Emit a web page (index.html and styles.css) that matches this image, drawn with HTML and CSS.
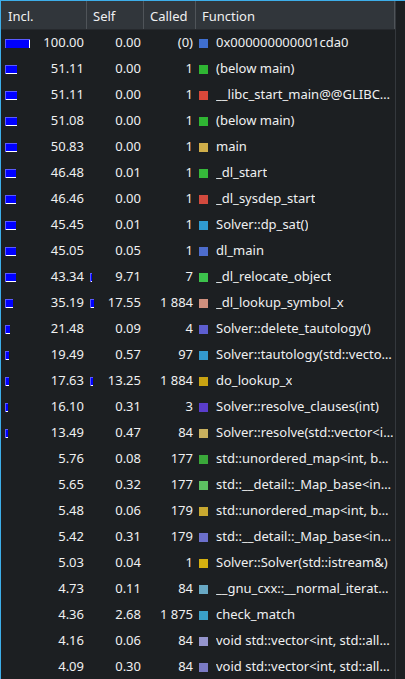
FILE: index.html
```html
<!DOCTYPE html>
<html>
<head>
<meta charset="utf-8">
<link rel="stylesheet" href="styles.css">
</head>
<body>
<div class="frame">
  <div class="table">
    <div class="head">
      <div class="hc">Incl.</div>
      <div class="hc">Self</div>
      <div class="hc">Called</div>
      <div class="hc">Function</div>
    </div>
    <div class="rows">
      <div class="row"><div class="c incl"><span class="bar full" style="width:25px"></span><span class="n">100.00</span></div><div class="c self"><span class="n">0.00</span></div><div class="c called">(0)</div><div class="c fn"><span class="sq" style="background:#3f6fd0"></span><span class="t">0x000000000001cda0</span></div></div>
      <div class="row"><div class="c incl"><span class="bar" style="width:12px"></span><span class="n">51.11</span></div><div class="c self"><span class="n">0.00</span></div><div class="c called">1</div><div class="c fn"><span class="sq" style="background:#2fb533"></span><span class="t">(below main)</span></div></div>
      <div class="row"><div class="c incl"><span class="bar" style="width:12px"></span><span class="n">51.11</span></div><div class="c self"><span class="n">0.00</span></div><div class="c called">1</div><div class="c fn"><span class="sq" style="background:#d8483a"></span><span class="t">__libc_start_main@@GLIBC…</span></div></div>
      <div class="row"><div class="c incl"><span class="bar" style="width:12px"></span><span class="n">51.08</span></div><div class="c self"><span class="n">0.00</span></div><div class="c called">1</div><div class="c fn"><span class="sq" style="background:#2fb533"></span><span class="t">(below main)</span></div></div>
      <div class="row"><div class="c incl"><span class="bar" style="width:12px"></span><span class="n">50.83</span></div><div class="c self"><span class="n">0.00</span></div><div class="c called">1</div><div class="c fn"><span class="sq" style="background:#cfae4a"></span><span class="t">main</span></div></div>
      <div class="row"><div class="c incl"><span class="bar" style="width:11px"></span><span class="n">46.48</span></div><div class="c self"><span class="n">0.01</span></div><div class="c called">1</div><div class="c fn"><span class="sq" style="background:#35b83a"></span><span class="t">_dl_start</span></div></div>
      <div class="row"><div class="c incl"><span class="bar" style="width:11px"></span><span class="n">46.46</span></div><div class="c self"><span class="n">0.00</span></div><div class="c called">1</div><div class="c fn"><span class="sq" style="background:#d24a3e"></span><span class="t">_dl_sysdep_start</span></div></div>
      <div class="row"><div class="c incl"><span class="bar" style="width:11px"></span><span class="n">45.45</span></div><div class="c self"><span class="n">0.01</span></div><div class="c called">1</div><div class="c fn"><span class="sq" style="background:#2f9bd2"></span><span class="t">Solver::dp_sat()</span></div></div>
      <div class="row"><div class="c incl"><span class="bar" style="width:11px"></span><span class="n">45.05</span></div><div class="c self"><span class="n">0.05</span></div><div class="c called">1</div><div class="c fn"><span class="sq" style="background:#4d6ccc"></span><span class="t">dl_main</span></div></div>
      <div class="row"><div class="c incl"><span class="bar" style="width:11px"></span><span class="n">43.34</span></div><div class="c self"><span class="bar" style="width:2px"></span><span class="n">9.71</span></div><div class="c called">7</div><div class="c fn"><span class="sq" style="background:#3cc24c"></span><span class="t">_dl_relocate_object</span></div></div>
      <div class="row"><div class="c incl"><span class="bar" style="width:8px"></span><span class="n">35.19</span></div><div class="c self"><span class="bar" style="width:4px"></span><span class="n">17.55</span></div><div class="c called">1 884</div><div class="c fn"><span class="sq" style="background:#d0907e"></span><span class="t">_dl_lookup_symbol_x</span></div></div>
      <div class="row"><div class="c incl"><span class="bar" style="width:5px"></span><span class="n">21.48</span></div><div class="c self"><span class="n">0.09</span></div><div class="c called">4</div><div class="c fn"><span class="sq" style="background:#5d5ed0"></span><span class="t">Solver::delete_tautology()</span></div></div>
      <div class="row"><div class="c incl"><span class="bar" style="width:4px"></span><span class="n">19.49</span></div><div class="c self"><span class="n">0.57</span></div><div class="c called">97</div><div class="c fn"><span class="sq" style="background:#3399cf"></span><span class="t">Solver::tautology(std::vecto…</span></div></div>
      <div class="row"><div class="c incl"><span class="bar" style="width:4px"></span><span class="n">17.63</span></div><div class="c self"><span class="bar" style="width:3px"></span><span class="n">13.25</span></div><div class="c called">1 884</div><div class="c fn"><span class="sq" style="background:#c9a312"></span><span class="t">do_lookup_x</span></div></div>
      <div class="row"><div class="c incl"><span class="bar" style="width:3px"></span><span class="n">16.10</span></div><div class="c self"><span class="n">0.31</span></div><div class="c called">3</div><div class="c fn"><span class="sq" style="background:#5a3dcc"></span><span class="t">Solver::resolve_clauses(int)</span></div></div>
      <div class="row"><div class="c incl"><span class="bar" style="width:3px"></span><span class="n">13.49</span></div><div class="c self"><span class="n">0.47</span></div><div class="c called">84</div><div class="c fn"><span class="sq" style="background:#c8b05e"></span><span class="t">Solver::resolve(std::vector&lt;i…</span></div></div>
      <div class="row"><div class="c incl"><span class="n">5.76</span></div><div class="c self"><span class="n">0.08</span></div><div class="c called">177</div><div class="c fn"><span class="sq" style="background:#3aa83a"></span><span class="t">std::unordered_map&lt;int, b…</span></div></div>
      <div class="row"><div class="c incl"><span class="n">5.65</span></div><div class="c self"><span class="n">0.32</span></div><div class="c called">177</div><div class="c fn"><span class="sq" style="background:#5cc062"></span><span class="t">std::__detail::_Map_base&lt;in…</span></div></div>
      <div class="row"><div class="c incl"><span class="n">5.48</span></div><div class="c self"><span class="n">0.06</span></div><div class="c called">179</div><div class="c fn"><span class="sq" style="background:#c8a830"></span><span class="t">std::unordered_map&lt;int, b…</span></div></div>
      <div class="row"><div class="c incl"><span class="n">5.42</span></div><div class="c self"><span class="n">0.31</span></div><div class="c called">179</div><div class="c fn"><span class="sq" style="background:#6c70cc"></span><span class="t">std::__detail::_Map_base&lt;in…</span></div></div>
      <div class="row"><div class="c incl"><span class="n">5.03</span></div><div class="c self"><span class="n">0.04</span></div><div class="c called">1</div><div class="c fn"><span class="sq" style="background:#d4b010"></span><span class="t">Solver::Solver(std::istream&amp;)</span></div></div>
      <div class="row"><div class="c incl"><span class="n">4.73</span></div><div class="c self"><span class="n">0.11</span></div><div class="c called">84</div><div class="c fn"><span class="sq" style="background:#68a8c4"></span><span class="t">__gnu_cxx::__normal_iterat…</span></div></div>
      <div class="row"><div class="c incl"><span class="n">4.36</span></div><div class="c self"><span class="n">2.68</span></div><div class="c called">1 875</div><div class="c fn"><span class="sq" style="background:#3aa0c8"></span><span class="t">check_match</span></div></div>
      <div class="row"><div class="c incl"><span class="n">4.16</span></div><div class="c self"><span class="n">0.06</span></div><div class="c called">84</div><div class="c fn"><span class="sq" style="background:#9494cc"></span><span class="t">void std::vector&lt;int, std::all…</span></div></div>
      <div class="row"><div class="c incl"><span class="n">4.09</span></div><div class="c self"><span class="n">0.30</span></div><div class="c called">84</div><div class="c fn"><span class="sq" style="background:#7a7ac4"></span><span class="t">void std::vector&lt;int, std::all…</span></div></div>
    </div>
  </div>
  <div class="side"></div>
</div>
</body>
</html>
```

FILE: styles.css
```css
* { box-sizing: border-box; }
html, body {
  margin: 0;
  padding: 0;
  background: #1c1f22;
}
body {
  width: 405px;
  height: 679px;
  overflow: hidden;
  font-family: "Noto Sans", "Open Sans", sans-serif;
  font-size: 13px;
  color: #eff0f1;
}
.frame {
  display: flex;
  width: 405px;
  height: 679px;
  border-top: 1px solid #3daee9;
  border-left: 1px solid #3daee9;
  overflow: hidden;
}
.table {
  width: 395px;
  flex: none;
  border-right: 1px solid #34383d;
}
.side {
  flex: 1;
  background: #1c1f22;
}
.head {
  display: grid;
  grid-template-columns: 86px 57px 52px 199px;
  height: 29px;
  background: #31363b;
  border-bottom: 1px solid #26292d;
}
.hc {
  display: flex;
  align-items: center;
  padding-left: 6px;
  padding-top: 1px;
  border-right: 1px solid #4f5459;
  white-space: nowrap;
}
.hc:first-child { padding-left: 7px; }
.row {
  display: grid;
  grid-template-columns: 86px 57px 52px 199px;
  height: 26px;
}
.c {
  display: flex;
  align-items: center;
  white-space: nowrap;
  overflow: hidden;
  padding-bottom: 2px;
}
.incl, .self {
  padding-left: 3px;
  padding-right: 3px;
}
.incl { padding-left: 4px; }
.n { margin-left: auto; }
.called {
  justify-content: flex-end;
  padding-right: 3px;
}
.bar {
  display: block;
  height: 9px;
  margin-top: 3px;
  background: #0000ff;
  border-top: 1px solid #5a5aff;
  border-left: 1px solid #5a5aff;
  box-shadow: inset -1px -2px 0 -1px #ffffff;
  flex: none;
}
.bar.full {
  box-shadow: inset -1px 0 0 #ffffff;
}
.fn {
  padding-left: 3px;
}
.sq {
  width: 9px;
  height: 9px;
  margin-top: 3px;
  margin-right: 8px;
  flex: none;
}
.t {
  overflow: hidden;
}
```
